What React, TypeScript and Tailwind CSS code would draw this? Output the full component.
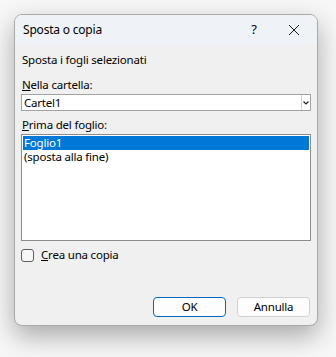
import React from 'react';

const font = { fontFamily: '"Noto Sans", "Liberation Sans", sans-serif' };

const App: React.FC = () => {
  return (
    <div className="w-[336px] h-[357px] bg-[#f7f7f7] pt-[14px] pl-[14px]" style={font}>
      <div className="w-[304px] h-[312px] flex flex-col rounded-[8px] border border-[#a9a9a9] bg-[#f0f0f0] overflow-hidden shadow-[0_10px_26px_rgba(0,0,0,0.32)] text-[11.5px] tracking-[-0.2px] text-black">
        {/* title bar */}
        <div className="h-[30px] flex items-center bg-[#eff3f8] shrink-0">
          <span className="pl-[8px] text-[12px] flex-1">Sposta o copia</span>
          <span className="w-[20px] text-center text-[13px] mr-[24px]">?</span>
          <svg width="12" height="12" viewBox="0 0 12 12" className="mr-[17px]">
            <path d="M1 1 L11 11 M11 1 L1 11" stroke="#1a1a1a" strokeWidth="1" />
          </svg>
        </div>

        {/* body */}
        <div className="flex-1 flex flex-col px-[6px] pt-[7px] pb-[8px]">
          <div className="h-[16px] leading-[16px] pl-[1px]">Sposta i fogli selezionati</div>

          <div className="h-[16px] leading-[16px] pl-[1px] mt-[9px]">
            <span className="underline">N</span>ella cartella:
          </div>
          <div className="mt-[1px] h-[17px] flex border border-[#a2a2a2] bg-white">
            <span className="flex-1 leading-[15px] pl-[2px]">Cartel1</span>
            <div className="w-[9px] border-l border-[#d4d4d4] flex items-center justify-center">
              <svg width="6" height="4" viewBox="0 0 6 4">
                <path d="M0.5 0.5 L3 3 L5.5 0.5" stroke="#222" strokeWidth="1.2" fill="none" />
              </svg>
            </div>
          </div>

          <div className="h-[16px] leading-[16px] pl-[1px] mt-[6px]">
            <span className="underline">P</span>rima del foglio:
          </div>
          <div className="mt-[1px] h-[107px] border border-[#8c8c8c] bg-white p-[1px]">
            <div className="h-[14px] leading-[14px] bg-[#0078d7] text-white pl-[1px]">Foglio1</div>
            <div className="h-[14px] leading-[14px] pl-[1px]">(sposta alla fine)</div>
          </div>

          <div className="mt-[6px] h-[16px] flex items-center">
            <div className="w-[13px] h-[13px] rounded-[3px] border border-[#5f5f5f] bg-[#f7f7f7]" />
            <span className="ml-[7px] leading-[16px]">
              <span className="underline">C</span>rea una copia
            </span>
          </div>

          <div className="flex-1" />

          <div className="flex justify-end gap-[11px] pr-[1px]">
            <button className="w-[73px] h-[20px] rounded-[4px] border border-[#0067c0] bg-[#fdfdfd] text-[11.5px] leading-[18px]">
              OK
            </button>
            <button className="w-[73px] h-[20px] rounded-[4px] border border-[#d0d0d0] bg-[#fdfdfd] text-[11.5px] leading-[18px]">
              Annulla
            </button>
          </div>
        </div>
      </div>
    </div>
  );
};

export default App;
